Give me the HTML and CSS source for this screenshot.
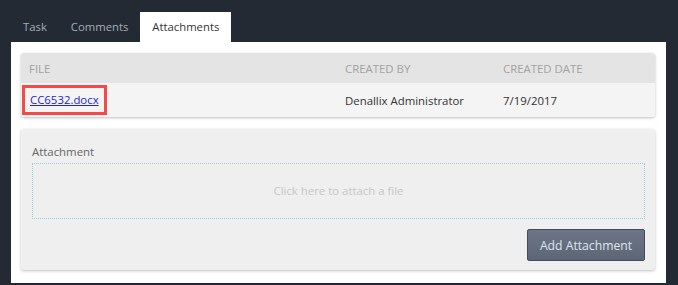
FILE: index.html
```html
<!DOCTYPE html>
<html lang="en">
<head>
    <meta charset="UTF-8">
    <title>Attachments</title>
    <link rel="stylesheet" href="styles.css">
</head>
<body>

<div class="tabs">
    <div class="tab">Task</div>
    <div class="tab">Comments</div>
    <div class="tab active">Attachments</div>
</div>

<div class="panel">
    <div class="card fileTable">
        <div class="tableRow tableHead">
            <div class="cell fileCell">FILE</div>
            <div class="cell">CREATED BY</div>
            <div class="cell">CREATED DATE</div>
        </div>
        <div class="tableRow tableBody">
            <div class="cell linkCell"><span class="highlight"><a href="#" class="fileLink">CC6532.docx</a></span></div>
            <div class="cell">Denallix Administrator</div>
            <div class="cell">7/19/2017</div>
        </div>
    </div>

    <div class="card uploadCard">
        <label class="fieldLabel">Attachment</label>
        <div class="dropZone">Click here to attach a file</div>
        <div class="actions">
            <button type="button" class="addButton">Add Attachment</button>
        </div>
    </div>
</div>

</body>
</html>
```

FILE: styles.css
```css
body {
    font-family: "Open Sans", "Noto Sans", sans-serif;
    font-size: 11.4px;
    background-color: #232a33;
    margin: 0;
    height: 285px;
}
.tabs {
    display: flex;
    padding: 12px 0 0 11px;
}
.tab {
    height: 30px;
    line-height: 30px;
    padding: 0 12px;
    color: #a3adb8;
    font-size: 11.3px;
}
.tab.active {
    background: #fff;
    color: #333;
}
.panel {
    background: #fff;
    margin: 0 12px 0 11px;
    padding: 11px 11px 13px 10px;
}
.card {
    border-radius: 3px;
    box-shadow: 0 1px 3px rgba(0, 0, 0, 0.25);
}
.fileTable {
    overflow: hidden;
}
.tableRow {
    display: grid;
    grid-template-columns: 316px 158px 1fr;
    align-items: center;
}
.tableHead {
    height: 30px;
    background: #e4e4e4;
    color: #a2a2a2;
}
.tableBody {
    height: 34px;
    background: #f4f4f4;
    color: #333;
}
.cell {
    padding-left: 8px;
}
.linkCell {
    padding-left: 1px;
}
.highlight {
    display: inline-block;
    border: 3px solid #f24a4a;
    padding: 3px 5px;
    line-height: 18px;
}
.fileLink {
    color: #2424d6;
}
.uploadCard {
    margin-top: 12px;
    background: #efefef;
    padding: 14px 10px 9px 11px;
}
.fieldLabel {
    display: block;
    color: #666;
    line-height: 18px;
    margin-bottom: 2px;
}
.dropZone {
    height: 54px;
    line-height: 54px;
    border: 1px dotted #8fd0e6;
    text-align: center;
    color: #c6c6c6;
}
.actions {
    display: flex;
    justify-content: flex-end;
    margin-top: 10px;
}
.addButton {
    width: 118px;
    height: 32px;
    font-family: inherit;
    font-size: 12.2px;
    color: #dfe5ed;
    background: linear-gradient(#6d7686, #5d6676);
    border: 1px solid #454c59;
    border-radius: 2px;
    cursor: pointer;
}
```
